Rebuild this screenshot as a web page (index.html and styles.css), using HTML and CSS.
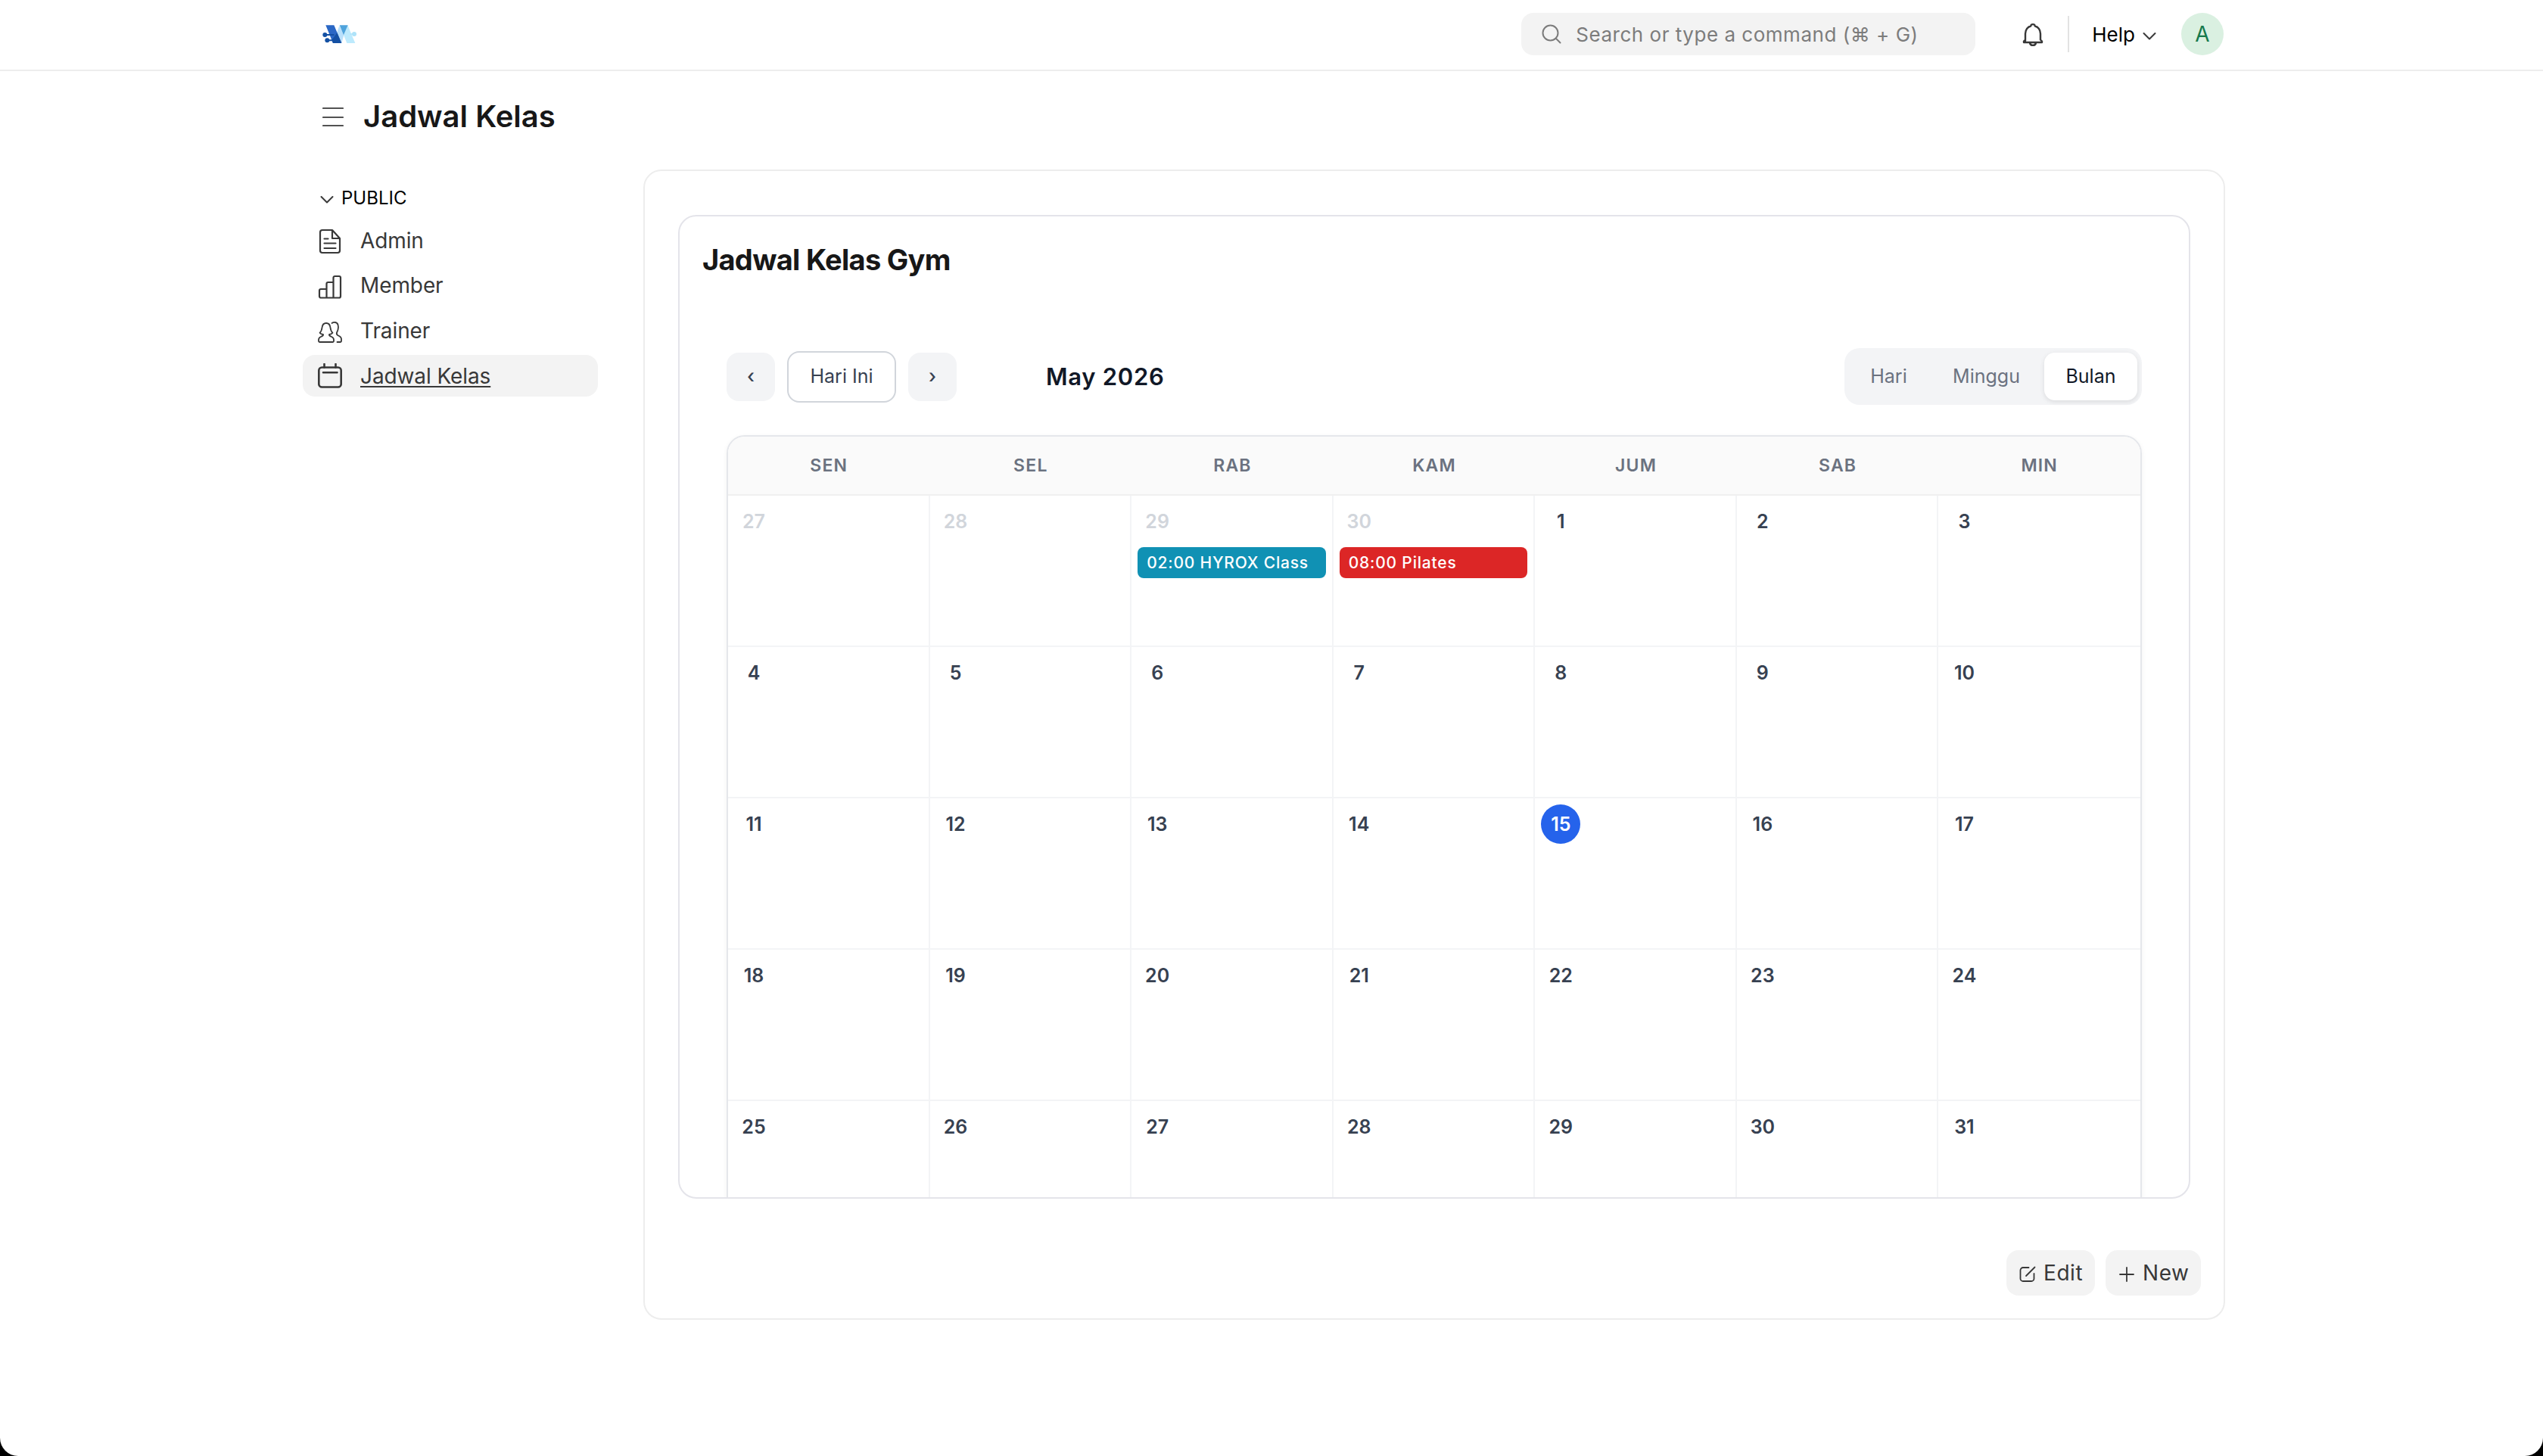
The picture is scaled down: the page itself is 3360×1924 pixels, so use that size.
FILE: index.html
```
<!DOCTYPE html>
<html lang="id">
<head>
    <meta charset="UTF-8">
    <meta name="viewport" content="width=device-width, initial-scale=1.0">
    <title>Jadwal Kelas</title>
    <link rel="stylesheet" href="styles.css">
</head>
<body>
<div class="page">
    <!-- Navbar -->
    <header class="navbar">
        <div class="container navbar-inner">
            <svg class="logo" width="46" height="25" viewBox="106 98 138 75">
                <path fill="#b9e0fb" d="M173 101l18 37-9 32-19-41z"/>
                <path fill="#bdeafd" d="M206 99l30 71h-33l-13-32z"/>
                <path fill="#2a67c5" d="M119 99h33l30 71h-34z"/>
                <path fill="#1450a3" d="M164 129l18 41h-34l-5-12z"/>
                <path fill="#4ea3dc" d="M174 99h33l-17 39z"/>
                <path stroke="#1450a3" stroke-width="6" d="M116 137h34M125 159h25"/>
                <circle cx="116" cy="137" r="9" fill="#1450a3"/>
                <circle cx="125" cy="159" r="9" fill="#1450a3"/>
                <path stroke="#aee3f9" stroke-width="5" d="M218 134h14"/>
                <circle cx="232" cy="134" r="9" fill="#aee3f9"/>
            </svg>
            <div class="search">
                <svg width="26" height="26" viewBox="0 0 26 26"><circle cx="11.5" cy="11.5" r="10"/><path d="M19 19l5.5 5.5"/></svg>
                <span>Search or type a command (⌘ + G)</span>
            </div>
            <svg class="bell" width="28" height="32" viewBox="0 0 28 32">
                <path d="M4 24V14.5C4 9 7.500 5.300 11.200 4.500C11.500 1.300 16.500 1.300 16.800 4.500C20.500 5.300 24 9 24 14.500V22.500L26 24.500V26H2V24.500L4 22.500M10 26.500C10.500 31 17.500 31 18 26.500"/>
            </svg>
            <span class="divider"></span>
            <span class="help">Help</span>
            <svg class="chevron" width="18" height="12" viewBox="0 0 18 12"><path d="M1.500 2l7.500 7.500 7.500-7.500"/></svg>
            <span class="avatar">A</span>
        </div>
    </header>

    <!-- Page head -->
    <div class="container page-head">
        <svg width="28" height="26" viewBox="0 0 28 26"><path d="M1 2h26M1 14h26M1 25h26"/></svg>
        <h1>Jadwal Kelas</h1>
    </div>

    <div class="container layout">
        <!-- Sidebar -->
        <aside class="sidebar">
            <div class="sidebar-label">
                <svg class="chevron" width="18" height="12" viewBox="0 0 18 12"><path d="M1.500 2l7.500 7.500 7.500-7.500"/></svg>
                PUBLIC
            </div>
            <a class="sidebar-item">
                <svg width="32" height="34" viewBox="0 0 32 34"><path d="M19 2H6a3 3 0 0 0-3 3v24a3 3 0 0 0 3 3h20a3 3 0 0 0 3-3V13zM19 2v11h10M8.500 13.500h5M8.500 19.500h15M8.500 26h15"/></svg>
                <span>Admin</span>
            </a>
            <a class="sidebar-item">
                <svg width="32" height="34" viewBox="0 0 32 34"><path d="M11.500 31.500H4a2 2 0 0 1-2-2V22a2 2 0 0 1 2-2h7.500M11.500 31.500V13a2 2 0 0 1 2-2h7M11.500 31.500h16.500a2 2 0 0 0 2-2V5a2 2 0 0 0-2-2h-5.500a2 2 0 0 0-2 2v26.500"/></svg>
                <span>Member</span>
            </a>
            <a class="sidebar-item">
                <svg class="thin" width="32" height="34" viewBox="0 0 32 34"><path d="M11 6C7.500 6 6 8.500 5.600 11.500C5.200 15 4.500 17 2.500 18.800C3.500 20.300 5 20.800 7 21C7.500 22.500 6 23.200 4 24C2 24.800 1 26 1 28V29.500a1.500 1.500 0 0 0 1.500 1.500h17a1.500 1.500 0 0 0 1.500-1.500V28C21 26 20 24.800 18 24C16 23.200 14.500 22.500 15 21C17 20.800 18.500 20.300 19.500 18.800C17.500 17 16.800 15 16.400 11.500C16 8.500 14.500 6 11 6zM18.500 6C20 5 21.500 4.800 23 5C26.500 5.600 27 9 27 11.500C27 14 26 16.500 25 18.500C24.300 20.500 25 21.500 27 22.500C29.500 23.600 31 24.500 31 27V29.500a1.500 1.500 0 0 1-1.500 1.500H25.500"/></svg>
                <span>Trainer</span>
            </a>
            <a class="sidebar-item active">
                <svg class="bold" width="32" height="34" viewBox="0 0 32 34"><rect x="1.300" y="5.500" width="29.400" height="26" rx="4"/><path d="M8.500 1v4.500M23.500 1v4.500M7 12.300h18.500"/></svg>
                <span>Jadwal Kelas</span>
            </a>
        </aside>

        <!-- Content -->
        <main class="content">
            <section class="widget">
                <h2>Jadwal Kelas Gym</h2>

                <div class="calendar">
                    <div class="toolbar">
                        <button class="nav-btn">‹</button>
                        <button class="today-btn">Hari Ini</button>
                        <button class="nav-btn">›</button>
                        <span class="month">May 2026</span>
                        <div class="views">
                            <button>Hari</button>
                            <button>Minggu</button>
                            <button class="active">Bulan</button>
                        </div>
                    </div>

                    <div class="month-grid">
                        <div class="weekdays">
                            <div>SEN</div>
                            <div>SEL</div>
                            <div>RAB</div>
                            <div>KAM</div>
                            <div>JUM</div>
                            <div>SAB</div>
                            <div>MIN</div>
                        </div>
                        <div class="days" id="days"></div>
                    </div>
                </div>
            </section>

            <div class="actions">
                <button class="edit-btn">
                    <svg width="22" height="22" viewBox="0 0 22 22"><path d="M12.500 2H5a3.500 3.500 0 0 0-3.500 3.500v11A3.500 3.500 0 0 0 5 20h11a3.500 3.500 0 0 0 3.500-3.500V10M9 13L20.500 1.500"/></svg>
                    Edit
                </button>
                <button class="new-btn">
                    <svg width="20" height="20" viewBox="0 0 20 20"><path d="M10 1v18M1 10h18"/></svg>
                    New
                </button>
            </div>
        </main>
    </div>
</div>

<script>
    const events = {
        '4-29': { text: '02:00 HYROX Class', color: 'teal' },
        '4-30': { text: '08:00 Pilates', color: 'red' }
    };
    const days = document.getElementById('days');

    // five weeks, starting on Monday 27 April
    for (let i = 0; i < 35; i++) {
        const date = new Date(2026, 3, 27 + i);
        const month = date.getMonth() + 1;
        const day = date.getDate();
        const event = events[`${month}-${day}`];
        const cell = document.createElement('div');
        cell.className = 'day';
        if (month === 4) cell.classList.add('other');
        if (month === 5 && day === 15) cell.classList.add('today');
        cell.innerHTML = `<span class="num">${day}</span>`;
        if (event) cell.innerHTML += `<div class="event ${event.color}">${event.text}</div>`;
        days.appendChild(cell);
    }
</script>
</body>
</html>
```

FILE: styles.css
```
* { box-sizing: border-box; }
body { margin: 0; background: #000; font-family: Inter, "Noto Sans", sans-serif; color: #383838; }
button { border: 0; font-family: inherit; padding: 0; }
svg { fill: none; stroke: #383838; stroke-width: 2; flex: none; stroke-linecap: round; stroke-linejoin: round; }
h1, h2 { margin: 0; color: #171717; }

.page { height: 1924px; background: #fff; border-radius: 0 0 24px 24px; overflow: hidden; }
.container { width: 2560px; margin: 0 auto; }

/* navbar */
.navbar { height: 94px; border-bottom: 2px solid #ededed; }
.navbar-inner { display: flex; align-items: center; height: 90px; padding: 0 22px 0 26px; }
.logo { stroke: none; }
.search { display: flex; align-items: center; gap: 19px; width: 600px; height: 56px; margin-left: auto; padding-left: 27px; border-radius: 16px; background: #f3f3f3; color: #7c7c7c; font-size: 26px; letter-spacing: 0.02em; }
.search svg { stroke: #7c7c7c; }
.bell { margin: 2px 0 0 62px; stroke-width: 2.4; }
.divider { width: 2px; height: 48px; margin: 0 30px 0 32px; background: #e2e2e2; }
.help { color: #000; font-size: 26px; }
.navbar .chevron { margin: 5px 33px 0 10px; }
.avatar { width: 56px; height: 56px; border-radius: 50%; background: #daf0e1; color: #16794c; font-size: 28px; line-height: 56px; text-align: center; }

/* page head */
.page-head { display: flex; align-items: center; gap: 26px; height: 118px; margin-bottom: 12px; padding-left: 26px; }
.page-head svg { margin-top: 2px; stroke: #525252; stroke-width: 2.2; }
.page-head h1 { font-size: 40px; font-weight: 600; }

.layout { display: flex; gap: 60px; padding-right: 20px; }

/* sidebar */
.sidebar { width: 390px; padding-top: 17px; }
.sidebar-label { display: flex; align-items: center; gap: 10px; height: 40px; margin-bottom: 9px; padding-left: 23px; color: #000; font-size: 24px; }
.sidebar-label .chevron { margin-top: 5px; }
.sidebar-item { display: flex; align-items: center; gap: 24px; height: 55.6px; margin-bottom: 4px; padding-left: 20px; border-radius: 16px; font-size: 28px; letter-spacing: -0.1px; }
.sidebar-item svg { margin-top: 3px; stroke-width: 2.2; }
.sidebar-item .thin { stroke-width: 1.8; }
.sidebar-item .bold { stroke-width: 2.6; margin-top: 0; }
.sidebar-item.active { background: #f3f3f3; }
.sidebar-item.active span { text-decoration: underline; text-decoration-thickness: 2px; text-underline-offset: 3px; }

/* content */
.content { width: 2090px; height: 1520px; padding: 58px 44px 0; border: 2px solid #ededed; border-radius: 24px; }
.widget { height: 1300px; padding: 33px 0 0; border: 2px solid #e4e4ea; border-radius: 24px; overflow: hidden; }
.widget h2 { margin: 0 30px 93px; font-size: 38px; line-height: 48px; letter-spacing: -0.7px; font-weight: 680; }

.calendar { padding: 0 62px; }
.toolbar { display: flex; align-items: center; gap: 16px; height: 75px; margin-bottom: 40px; }
.toolbar button { padding-bottom: 2px; }
.nav-btn { width: 64px; height: 64px; border-radius: 16px; background: #f3f4f6; color: #374151; font-size: 25px; font-weight: 500; }
.today-btn { width: 144px; height: 68px; border: 2px solid #d1d5db; border-radius: 16px; background: #fff; color: #374151; font-size: 25px; }
.month { margin-left: 102px; color: #111827; font-size: 31px; font-weight: 580; letter-spacing: 0.7px; }
.views { display: flex; width: 393px; height: 75px; margin-left: auto; padding: 6px; border-radius: 20px; background: #f3f4f6; }
.views button { flex: none; width: 105px; border-radius: 14px; background: none; color: #6b7280; font-size: 25px; }
.views button:nth-child(2) { width: 153px; }
.views button.active { width: 123px; background: #fff; color: #111827; box-shadow: 0 2px 6px rgba(0, 0, 0, 0.1); }

.month-grid { border: 2px solid #e5e7eb; border-radius: 24px; overflow: hidden; box-shadow: 0 2px 6px rgba(0, 0, 0, 0.06); }
.weekdays { display: grid; grid-template-columns: repeat(7, 1fr); height: 78px; background: #fafafa; border-bottom: 2px solid #f0f0f0; color: #6b7280; font-size: 23px; font-weight: 560; line-height: 76px; text-align: center; letter-spacing: 1.2px; }
.days { display: grid; grid-template-columns: repeat(7, 1fr); grid-auto-rows: 200px; }
.day { padding: 8px; border-right: 2px solid #f3f4f6; border-bottom: 2px solid #f3f4f6; color: #374151; }
.day:nth-child(7n) { border-right: 0; }
.num { display: block; width: 52px; height: 52px; border-radius: 50%; font-size: 25px; font-weight: 560; line-height: 52px; text-align: center; }
.other .num { color: #d1d5db; }
.today .num { background: #2563eb; color: #fff; }
.event { height: 41px; margin-top: 8px; padding-left: 12px; border-radius: 8px; color: #fff; font-size: 21px; font-weight: 450; line-height: 41px; letter-spacing: 0.8px; white-space: nowrap; }
.teal { background: #1091b4; }
.red { background: #dc2626; }

/* actions */
.actions { display: flex; justify-content: flex-end; gap: 14px; margin: 68px -14px 0 0; }
.actions button { display: flex; align-items: center; height: 60px; padding-left: 17px; border-radius: 16px; background: #f3f3f3; color: #383838; font-size: 28px; letter-spacing: 0.02em; }
.actions svg { margin: 4px 10px 0 0; stroke-width: 1.8; }
.actions .edit-btn { width: 117px; }
.actions .new-btn { width: 126px; padding-left: 18px; }
.actions .new-btn svg { margin-right: 11px; }
```
